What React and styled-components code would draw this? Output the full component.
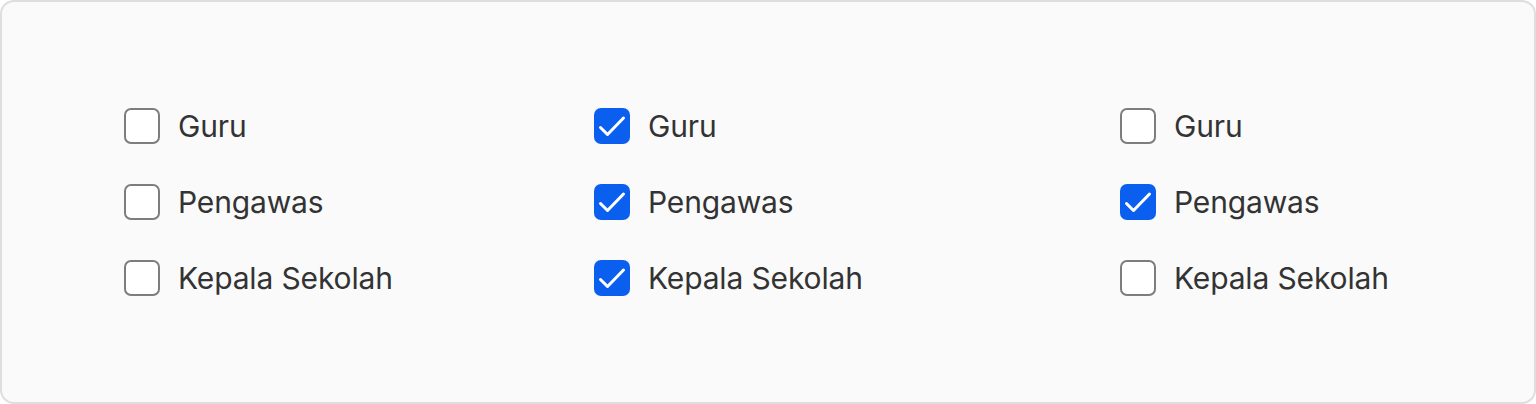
import React from "react";
import styled, { createGlobalStyle } from "styled-components";

const Global = createGlobalStyle`
  html, body { margin: 0; padding: 0; background: #ffffff; }
  body { font-family: Inter, "Noto Sans", sans-serif; }
  * { box-sizing: border-box; }
`;

const Card = styled.div`
  width: 1536px;
  height: 404px;
  background: #fafafa;
  border: 2px solid #dedede;
  border-radius: 14px;
  padding: 106px 0 0 122px;
`;

const Grid = styled.div`
  display: grid;
  grid-template-columns: 470px 526px auto;
  grid-auto-flow: column;
  grid-template-rows: repeat(3, 36px);
  row-gap: 40px;
`;

const Item = styled.label`
  display: flex;
  align-items: center;
  gap: 18px;
  height: 36px;
  cursor: pointer;
`;

const Box = styled.span`
  width: 36px;
  height: 36px;
  flex: none;
  border-radius: 7px;
  display: flex;
  align-items: center;
  justify-content: center;
  background: ${(p) => (p.$checked ? "#0b5fee" : "#ffffff")};
  border: ${(p) => (p.$checked ? "none" : "2px solid #7d7d7d")};
`;

const Label = styled.span`
  font-size: 30px;
  color: #333333;
  line-height: 1;
  letter-spacing: -0.15px;
`;

const Check = () => (
  <svg width="36" height="36" viewBox="0 0 36 36" fill="none">
    <path
      d="M6.5 19.5 L13.5 26.5 L29.5 10"
      stroke="#ffffff"
      strokeWidth="3"
      strokeLinecap="round"
      strokeLinejoin="round"
    />
  </svg>
);

const columns = [
  [false, false, false],
  [true, true, true],
  [false, true, false],
];
const labels = ["Guru", "Pengawas", "Kepala Sekolah"];

export default function App() {
  return (
    <>
      <Global />
      <Card>
        <Grid>
          {columns.map((col, ci) =>
            col.map((checked, ri) => (
              <Item key={`${ci}-${ri}`}>
                <Box $checked={checked}>{checked && <Check />}</Box>
                <Label>{labels[ri]}</Label>
              </Item>
            ))
          )}
        </Grid>
      </Card>
    </>
  );
}
